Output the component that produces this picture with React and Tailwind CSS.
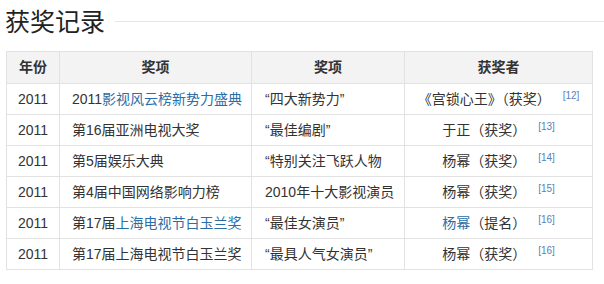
const rows = [
  { year: '2011', award: [{ t: '2011' }, { t: '影视风云榜新势力盛典', link: true }], item: '“四大新势力”', winner: [{ t: '《宫锁心王》（获奖）' }], ref: '[12]' },
  { year: '2011', award: [{ t: '第16届亚洲电视大奖' }], item: '“最佳编剧”', winner: [{ t: '于正（获奖）' }], ref: '[13]' },
  { year: '2011', award: [{ t: '第5届娱乐大典' }], item: '“特别关注飞跃人物', winner: [{ t: '杨幂（获奖）' }], ref: '[14]' },
  { year: '2011', award: [{ t: '第4届中国网络影响力榜' }], item: '2010年十大影视演员', winner: [{ t: '杨幂（获奖）' }], ref: '[15]' },
  { year: '2011', award: [{ t: '第17届' }, { t: '上海电视节白玉兰奖', link: true }], item: '“最佳女演员”', winner: [{ t: '杨幂', link: true }, { t: '（提名）' }], ref: '[16]' },
  { year: '2011', award: [{ t: '第17届上海电视节白玉兰奖' }], item: '“最具人气女演员”', winner: [{ t: '杨幂（获奖）' }], ref: '[16]' },
];

function Parts({ parts }) {
  return parts.map((p, i) =>
    p.link ? (
      <span key={i} className="text-[#2a6ea6]">{p.t}</span>
    ) : (
      <span key={i}>{p.t}</span>
    )
  );
}

export default function App() {
  return (
    <div className="w-[604px] h-[284px] bg-white text-[#333] font-['Liberation_Sans','Noto_Sans_CJK_SC',sans-serif]">
      {/* Section title */}
      <div className="flex items-center pl-[5px] pt-[6px] h-[38px]">
        <h2 className="text-[25px] leading-none text-[#222] font-normal">获奖记录</h2>
        <div className="flex-1 h-px bg-[#e6e6e6] ml-[10px] -mt-[2px]" />
      </div>

      {/* Awards table */}
      <table className="ml-[6px] mt-[13px] w-[586px] border-collapse text-[14px] table-fixed">
        <colgroup>
          <col className="w-[53px]" />
          <col className="w-[192px]" />
          <col className="w-[153px]" />
          <col className="w-[188px]" />
        </colgroup>
        <thead>
          <tr className="bg-[#f3f3f3] h-[32px]">
            <th className="border border-[#e2e2e2] font-bold">年份</th>
            <th className="border border-[#e2e2e2] font-bold">奖项</th>
            <th className="border border-[#e2e2e2] font-bold">奖项</th>
            <th className="border border-[#e2e2e2] font-bold">获奖者</th>
          </tr>
        </thead>
        <tbody>
          {rows.map((r, i) => (
            <tr key={i} className="h-[31px]">
              <td className="border border-[#e2e2e2] text-center">{r.year}</td>
              <td className="border border-[#e2e2e2] pl-[12px] whitespace-nowrap">
                <Parts parts={r.award} />
              </td>
              <td className="border border-[#e2e2e2] pl-[13px] whitespace-nowrap">{r.item}</td>
              <td className="border border-[#e2e2e2] text-center whitespace-nowrap">
                <Parts parts={r.winner} />
                <sup className="ml-[12px] text-[10px] text-[#5a7fb5] font-['Liberation_Sans',sans-serif]">{r.ref}</sup>
              </td>
            </tr>
          ))}
        </tbody>
      </table>
    </div>
  );
}
